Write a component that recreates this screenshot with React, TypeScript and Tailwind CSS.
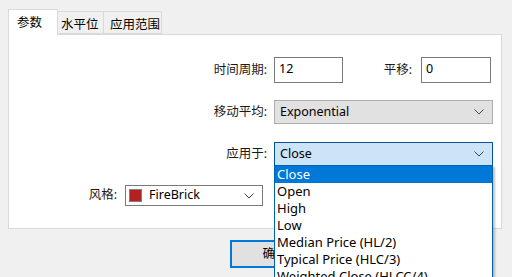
import React from "react"

const font = { fontFamily: '"Segoe UI", "Noto Sans", "Noto Sans CJK SC", sans-serif' }

function Chevron() {
  return (
    <svg width="10" height="6" viewBox="0 0 10 6" className="ml-auto mr-[8px]">
      <path d="M0.5 0.5 L5 5 L9.5 0.5" fill="none" stroke="#444" strokeWidth="1" />
    </svg>
  )
}

type LabelProps = { width: string, children: React.ReactNode }

function Label({ width, children }: LabelProps) {
  return <div className={`${width} text-right text-[12.5px] text-[#1a1a1a] leading-none`}>{children}</div>
}

const items = [
  "Close",
  "Open",
  "High",
  "Low",
  "Median Price (HL/2)",
  "Typical Price (HLC/3)",
  "Weighted Close (HLCC/4)",
]

export default function App() {
  return (
    <div style={font} className="relative w-[512px] h-[277px] overflow-hidden bg-[#f0f0f0] text-[12.5px] text-black">
      <div className="pl-[8px] pt-[9px]">
        {/* tabs */}
        <div className="flex items-end h-[25px]">
          <div className="relative z-10 -mb-px h-[26px] w-[50px] bg-white border border-b-0 border-[#d9d9d9] pl-[8px] pt-[4px]">参数</div>
          <div className="h-[23px] w-[46px] border border-l-0 border-[#d9d9d9] pl-[3px] pt-[4px]">水平位</div>
          <div className="h-[23px] w-[58px] border border-l-0 border-[#d9d9d9] pl-[6px] pt-[4px]">应用范围</div>
        </div>

        {/* panel */}
        <div className="w-[494px] h-[195px] bg-white border border-[#d9d9d9] pt-[22px]">
          <div className="flex items-center">
            <Label width="w-[258px]">时间周期:</Label>
            <div className="ml-[7px] w-[69px] h-[26px] border border-[#7a7a7a] pl-[4px] pt-[2px] leading-[18px]">12</div>
            <Label width="w-[69px]">平移:</Label>
            <div className="ml-[9px] w-[70px] h-[26px] border border-[#7a7a7a] pl-[4px] pt-[2px] leading-[18px]">0</div>
          </div>

          <div className="flex items-center mt-[17px]">
            <Label width="w-[258px]">移动平均:</Label>
            <div className="ml-[7px] w-[219px] h-[24px] flex items-center border border-[#adadad] bg-[#e1e1e1] pl-[5px]">
              Exponential
              <Chevron />
            </div>
          </div>

          <div className="flex items-center mt-[18px]">
            <Label width="w-[258px]">应用于:</Label>
            <div className="ml-[7px] w-[219px] h-[24px] flex items-center border border-[#005499] bg-[#cce4f7] pl-[5px]">
              Close
              <Chevron />
            </div>
          </div>

          <div className="flex items-center mt-[19px]">
            <Label width="w-[108px]">风格:</Label>
            <div className="ml-[8px] w-[138px] h-[21px] flex items-center border border-[#7a7a7a] bg-white pl-[3px]">
              <div className="w-[13px] h-[13px] bg-[#b22222] border border-[#808080]" />
              <span className="ml-[7px]">FireBrick</span>
              <Chevron />
            </div>
          </div>
        </div>

        {/* buttons */}
        <div className="flex mt-[11px]">
          <div className="ml-[222px] w-[90px] h-[28px] border-2 border-[#0078d7] bg-[#e1e1e1] flex items-center justify-center">确定</div>
        </div>
      </div>

      {/* open dropdown list */}
      <div className="absolute left-[274px] top-[165px] w-[219px] h-[120px] bg-white border border-[#0063b1] shadow-[2px_2px_2px_rgba(0,0,0,0.25)]">
        {items.map((item, i) => (
          <div
            key={item}
            className={`h-[17px] leading-[17px] pl-[2px] text-[13px] ${i === 0 ? "bg-[#0078d7] text-white" : "text-black"}`}
          >
            {item}
          </div>
        ))}
      </div>
    </div>
  )
}
